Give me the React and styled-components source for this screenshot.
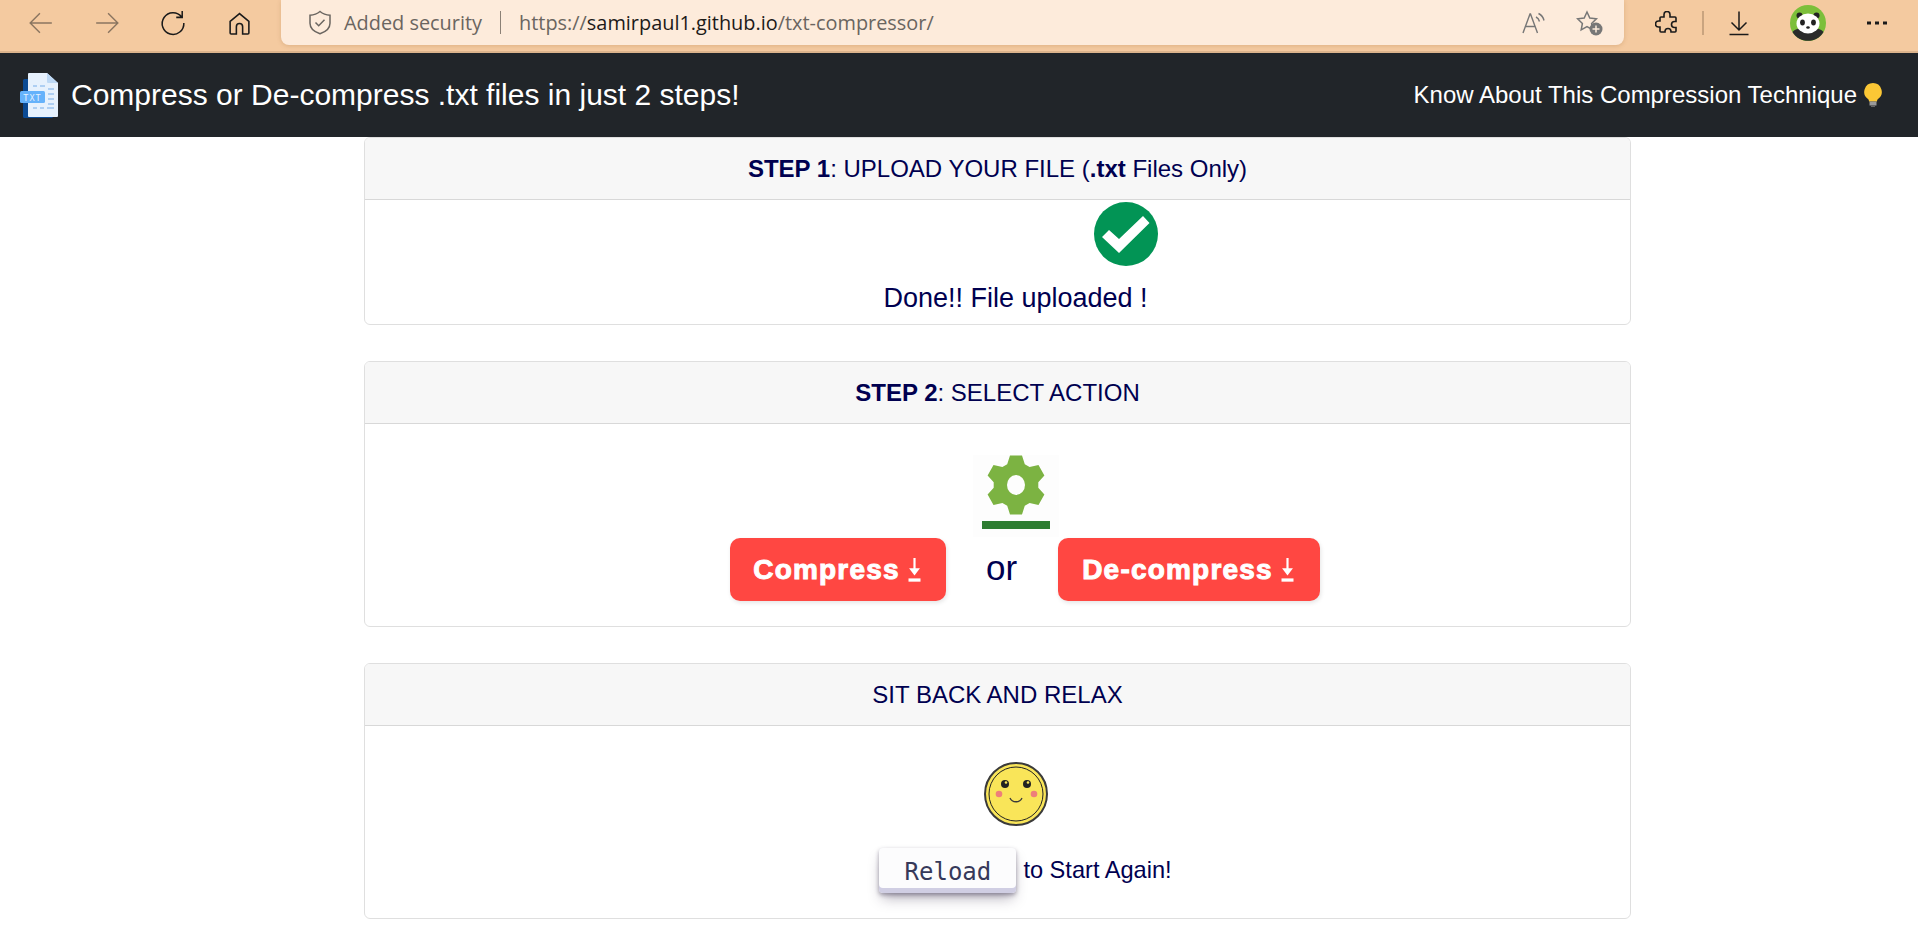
import styled, { createGlobalStyle } from "styled-components";

const GlobalStyle = createGlobalStyle`
  html, body {
    margin: 0;
    padding: 0;
    background: #fff;
    overflow: hidden;
  }
  body {
    font-family: "Liberation Sans", Arial, sans-serif;
    color: #000050;
  }
`;

const Toolbar = styled.div`
  display: flex;
  height: 51px;
  padding-left: 8px;
  padding-right: 8px;
  background: #f4caa0;
  border-bottom: 2px solid #dcb48c;
`;

const Slot = styled.div`
  display: flex;
  align-items: center;
  justify-content: center;
  flex: none;
  width: ${(p) => p.$w || 66}px;
  height: 46px;
`;

const AddressBar = styled.div`
  display: flex;
  align-items: center;
  flex: 1;
  height: 45px;
  margin-left: 9px;
  margin-right: 10px;
  padding: 0 21px 0 26px;
  background: #fdebdb;
  border-radius: 0 0 8px 8px;
  box-shadow: 0 1px 4px rgba(170, 120, 70, 0.3);
  font-family: "Open Sans", "Noto Sans", sans-serif;
  font-size: 19.9px;
  color: #6a6560;
`;

const Security = styled.span`
  margin-left: 11px;
  white-space: nowrap;
`;

const UrlDivider = styled.span`
  width: 1px;
  height: 23px;
  margin: 0 18px 0 18px;
  background: #8b8076;
`;

const Url = styled.span`
  flex: 1;
  white-space: nowrap;
  b {
    font-weight: 400;
    color: #1c1a18;
  }
`;

const AddressIcons = styled.div`
  display: flex;
  align-items: center;
  gap: 30px;
`;

const ToolDivider = styled.div`
  width: 2px;
  height: 24px;
  background: #c9a47f;
`;

const NavBar = styled.nav`
  display: flex;
  align-items: center;
  justify-content: space-between;
  height: 84px;
  padding: 0 36px 0 20px;
  background: #212529;
  color: #fff;
`;

const Brand = styled.div`
  display: flex;
  align-items: center;
  gap: 11px;
  font-size: 30px;
`;

const AboutLink = styled.a`
  display: flex;
  align-items: center;
  gap: 7px;
  font-size: 24px;
  color: #fff;
`;

const Main = styled.main`
  display: flex;
  flex-direction: column;
  gap: 36px;
  width: 1267px;
  margin-left: 364px;
`;

const Card = styled.section`
  border: 1px solid rgba(0, 0, 0, 0.125);
  border-radius: 6px;
  overflow: hidden;
`;

const CardHeader = styled.header`
  display: flex;
  align-items: center;
  justify-content: center;
  height: 61px;
  background: #f7f7f7;
  border-bottom: 1px solid rgba(0, 0, 0, 0.125);
  font-size: 24px;
  white-space: pre;
`;

const CardBody = styled.div`
  display: flex;
  flex-direction: column;
  align-items: center;
  height: ${(p) => p.$h}px;
  padding-left: 36px;
`;

const CheckWrap = styled.div`
  display: flex;
  margin-top: 2px;
  margin-left: 220px;
`;

const DoneText = styled.p`
  margin: 17px 0 0;
  font-size: 27px;
`;

const GearBox = styled.div`
  display: flex;
  margin-top: 31px;
  background: #fdfdfd;
`;

const ActionRow = styled.div`
  display: flex;
  align-items: flex-start;
  margin-top: 1px;
  margin-left: 18px;
`;

const ActionButton = styled.button`
  display: flex;
  align-items: center;
  justify-content: center;
  gap: 7px;
  width: ${(p) => p.$w}px;
  height: 63px;
  padding: 0;
  border: 0;
  border-radius: 10px;
  background: #ff4742;
  box-shadow: rgba(0, 0, 0, 0.1) 1px 2px 4px;
  color: #fff;
  font-family: "Liberation Sans", Arial, sans-serif;
  font-size: 28px;
  font-weight: 700;
  letter-spacing: 1.2px;
  -webkit-text-stroke: 1px #fff;
`;

const OrText = styled.span`
  width: 112px;
  text-align: center;
  font-size: 35px;
  line-height: 60px;
`;

const SmileWrap = styled.div`
  display: flex;
  margin-top: 36px;
`;

const ReloadRow = styled.div`
  display: flex;
  align-items: center;
  margin-top: 22px;
  margin-left: 20px;
  font-size: 23.6px;
`;

const ReloadButton = styled.button`
  width: 137px;
  height: 45px;
  margin-right: 7px;
  padding: 2px 0 0;
  border: 0;
  border-radius: 4px;
  background: #fcfcfd;
  box-shadow: rgba(45, 35, 66, 0.4) 0 2px 4px,
    rgba(45, 35, 66, 0.35) 0 8px 14px -3px, #d0cee3 0 -5px 0 inset;
  color: #36395a;
  font-family: "DejaVu Sans Mono", "Liberation Mono", monospace;
  font-size: 24px;
`;

function Line({ d, color = "#1a1a1a", w = 24, h = 24, sw = 1.6 }) {
  return (
    <svg width={w} height={h} viewBox="0 0 24 24" fill="none" stroke={color} strokeWidth={sw}>
      <path d={d} />
    </svg>
  );
}

function ShieldIcon() {
  return (
    <svg width="26" height="25" viewBox="0 0 26 25" fill="none" stroke="#6a6560" strokeWidth="1.5">
      <path d="M13 1.5c3 2.6 6 3.6 10 3.8v8c0 5-4 8.500-10 10.500-6-2-10-5.500-10-10.500v-8c4-.2 7-1.200 10-3.800z" />
      <path d="M8.500 12.500l3.200 3.200 5.800-6" />
    </svg>
  );
}

function ReadAloudIcon() {
  return (
    <svg width="24" height="24" viewBox="0 0 24 24" fill="none" stroke="#777" strokeWidth="1.4">
      <path d="M1 22L8 3h.5l7 19M3.500 15.500h9.500" />
      <path d="M14 6c2 1 3 2.500 3.500 4.500M16.500 2.500c3 1.500 4.800 3.700 5.500 7" />
    </svg>
  );
}

function FavIcon() {
  return (
    <svg width="27" height="26" viewBox="0 0 27 26">
      <path
        d="M11 2l2.800 6 6.600.8-4.800 4.600 1.200 6.400L11 16.700l-5.800 3.100 1.200-6.400L1.600 8.800 8.200 8z"
        fill="none"
        stroke="#777"
        strokeWidth="1.5"
      />
      <circle cx="20" cy="19" r="6.500" fill="#777" />
      <path d="M20 15.500v7M16.500 19h7" stroke="#fdebdb" strokeWidth="1.500" />
    </svg>
  );
}

function PandaAvatar() {
  return (
    <svg width="36" height="36" viewBox="0 0 36 36">
      <circle cx="18" cy="18" r="18" fill="#7cbf3a" />
      <path d="M2.500 27c4-6 27-6 31 0a18 18 0 0 1-31 0z" fill="#2b2b2b" />
      <circle cx="9.500" cy="10.500" r="3" fill="#222" />
      <circle cx="26.500" cy="10.500" r="3" fill="#222" />
      <ellipse cx="18" cy="18.500" rx="11.500" ry="10" fill="#fff" />
      <ellipse cx="12.500" cy="17.500" rx="2.400" ry="3" fill="#222" />
      <ellipse cx="23.500" cy="17.500" rx="2.400" ry="3" fill="#222" />
      <ellipse cx="18" cy="22.500" rx="1.800" ry="1.200" fill="#222" />
    </svg>
  );
}

function FileIcon() {
  return (
    <svg width="40" height="45" viewBox="0 0 40 45">
      <rect x="3" y="6" width="30" height="39" rx="1.500" fill="#0b4a93" />
      <path d="M8 1a1 1 0 0 1 1-1h18l11 10v33a1 1 0 0 1-1 1H9a1 1 0 0 1-1-1z" fill="#e6f1fd" />
      <path d="M27 0l11 10H28a1 1 0 0 1-1-1z" fill="#bcd8f5" />
      <path
        d="M13 13h4M20 13h5M28 16h6M28 21h6M28 26h6M28 31h6M13 35h4M20 35h4M27 35h7"
        stroke="#9cc4f0"
        strokeWidth="1.500"
      />
      <rect x="0" y="18" width="25" height="12" rx="1.500" fill="#65b2fb" />
      <text x="12.500" y="27.500" textAnchor="middle" fontFamily="DejaVu Sans Mono, monospace" fontSize="8.500" fill="#e6f1fd" letterSpacing="1">
        TXT
      </text>
    </svg>
  );
}

function BulbIcon() {
  return (
    <svg width="18" height="24" viewBox="0 0 18 24">
      <path d="M9 0a8.800 8.800 0 0 0-5 16c.8.700 1 1.500 1 2.500h8c0-1 .2-1.800 1-2.500A8.800 8.800 0 0 0 9 0z" fill="#fbc735" />
      <rect x="5.500" y="18.500" width="7" height="4" fill="#9a9a9a" />
      <rect x="7" y="22.500" width="4" height="1.500" fill="#666" />
    </svg>
  );
}

function CheckCircle() {
  return (
    <svg width="64" height="64" viewBox="0 0 64 64">
      <circle cx="32" cy="32" r="32" fill="#029455" />
      <path d="M8 35l7-7 10 9 24-23 6.500 7L25 51z" fill="#fff" />
    </svg>
  );
}

// six teeth, drawn round the centre
function gearPath(cx, cy, outer, inner) {
  const pts = [];
  for (let i = 0; i < 6; i++) {
    const a = (i * Math.PI) / 3 - Math.PI / 2;
    const spread = [-0.4, -0.2, 0.2, 0.4];
    spread.forEach((s, j) => {
      const r = j === 1 || j === 2 ? outer : inner;
      pts.push(`${(cx + r * Math.cos(a + s)).toFixed(1)} ${(cy + r * Math.sin(a + s)).toFixed(1)}`);
    });
  }
  return "M" + pts.join("L") + "Z";
}

function GearIcon() {
  return (
    <svg width="86" height="82" viewBox="0 0 86 82">
      <path d={gearPath(43, 30, 30, 22.5)} fill="#7cb342" />
      <ellipse cx="43" cy="30" rx="9" ry="10" fill="#fdfdfd" />
      <rect x="9" y="66" width="68" height="8" fill="#2e7d32" />
    </svg>
  );
}

function Smiley() {
  return (
    <svg width="64" height="64" viewBox="0 0 64 64">
      <circle cx="32" cy="32" r="31" fill="#f9e559" stroke="#3a3a3a" strokeWidth="2" />
      <circle cx="32" cy="32" r="27" fill="none" stroke="#222" strokeWidth="1" />
      <circle cx="21" cy="22" r="4" fill="#222" />
      <circle cx="43" cy="22" r="4" fill="#222" />
      <circle cx="22" cy="20.500" r="1.300" fill="#f9e559" />
      <circle cx="44" cy="20.500" r="1.300" fill="#f9e559" />
      <circle cx="15" cy="32" r="3.300" fill="#ee7f7a" />
      <circle cx="50" cy="32" r="3.300" fill="#ee7f7a" />
      <path d="M26 36c2 5 10 5 12 0" fill="none" stroke="#3a3a3a" strokeWidth="1.300" />
    </svg>
  );
}

function DownGlyph() {
  return (
    <svg width="15" height="24" viewBox="0 0 13 22" fill="none" stroke="#fff">
      <path d="M6.500 0v13" strokeWidth="2" />
      <path d="M1.500 9.500h10l-5 6.500z" fill="#fff" strokeWidth="0" />
      <path d="M1 20.200h11" strokeWidth="3" />
    </svg>
  );
}

export default function App() {
  return (
    <>
      <GlobalStyle />
      <Toolbar>
        <Slot>
          <Line d="M22 12H2M11 3l-9 9 9 9" color="#8a7560" w={26} h={26} sw={1.3} />
        </Slot>
        <Slot>
          <Line d="M2 12h20M13 3l9 9-9 9" color="#8a7560" w={26} h={26} sw={1.3} />
        </Slot>
        <Slot>
          <Line d="M20 6.500A10 10 0 1 0 22 12M15 6.800h5.500V1" w={26} h={28} sw={1.4} />
        </Slot>
        <Slot>
          <Line d="M12 2.500L3 10v11a1 1 0 0 0 1 1h5v-7a3 3 0 0 1 6 0v7h5a1 1 0 0 0 1-1V10z" w={25} h={25} sw={1.5} />
        </Slot>
        <AddressBar>
          <ShieldIcon />
          <Security>Added security</Security>
          <UrlDivider />
          <Url>
            https://<b>samirpaul1.github.io</b>/txt-compressor/
          </Url>
          <AddressIcons>
            <ReadAloudIcon />
            <FavIcon />
          </AddressIcons>
        </AddressBar>
        <Slot>
          <Line d="M9 3.500a3 3 0 0 1 6 0V6h5a1 1 0 0 1 1 1v3.500h-1.500a3 3 0 0 0 0 6H21V20a1 1 0 0 1-1 1h-4v-.5a3 3 0 0 0-6 0v.5H6a1 1 0 0 1-1-1v-4H3.500a3 3 0 0 1 0-6H5V7a1 1 0 0 1 1-1h3z" w={24} h={24} sw={1.6} />
        </Slot>
        <Slot $w={6}>
          <ToolDivider />
        </Slot>
        <Slot>
          <Line d="M12 0v18M4.500 11l7.500 7.500 7.500-7.500M2.500 23h19" w={24} h={25} sw={1.5} />
        </Slot>
        <Slot $w={72}>
          <PandaAvatar />
        </Slot>
        <Slot>
          <Line d="M2 12h4M10 12h4M18 12h4" w={24} h={24} sw={3} />
        </Slot>
      </Toolbar>
      <NavBar>
        <Brand>
          <FileIcon />
          Compress or De-compress .txt files in just 2 steps!
        </Brand>
        <AboutLink>
          Know About This Compression Technique
          <BulbIcon />
        </AboutLink>
      </NavBar>
      <Main>
        <Card>
          <CardHeader>
            <b>STEP 1</b>: UPLOAD YOUR FILE (<b>.txt</b> Files Only)
          </CardHeader>
          <CardBody $h={124}>
            <CheckWrap>
              <CheckCircle />
            </CheckWrap>
            <DoneText>Done!! File uploaded !</DoneText>
          </CardBody>
        </Card>
        <Card>
          <CardHeader>
            <b>STEP 2</b>: SELECT ACTION
          </CardHeader>
          <CardBody $h={202}>
            <GearBox>
              <GearIcon />
            </GearBox>
            <ActionRow>
              <ActionButton $w={216}>
                Compress <DownGlyph />
              </ActionButton>
              <OrText>or</OrText>
              <ActionButton $w={262}>
                De-compress <DownGlyph />
              </ActionButton>
            </ActionRow>
          </CardBody>
        </Card>
        <Card>
          <CardHeader>SIT BACK AND RELAX</CardHeader>
          <CardBody $h={192}>
            <SmileWrap>
              <Smiley />
            </SmileWrap>
            <ReloadRow>
              <ReloadButton>Reload</ReloadButton>
              to Start Again!
            </ReloadRow>
          </CardBody>
        </Card>
      </Main>
    </>
  );
}
